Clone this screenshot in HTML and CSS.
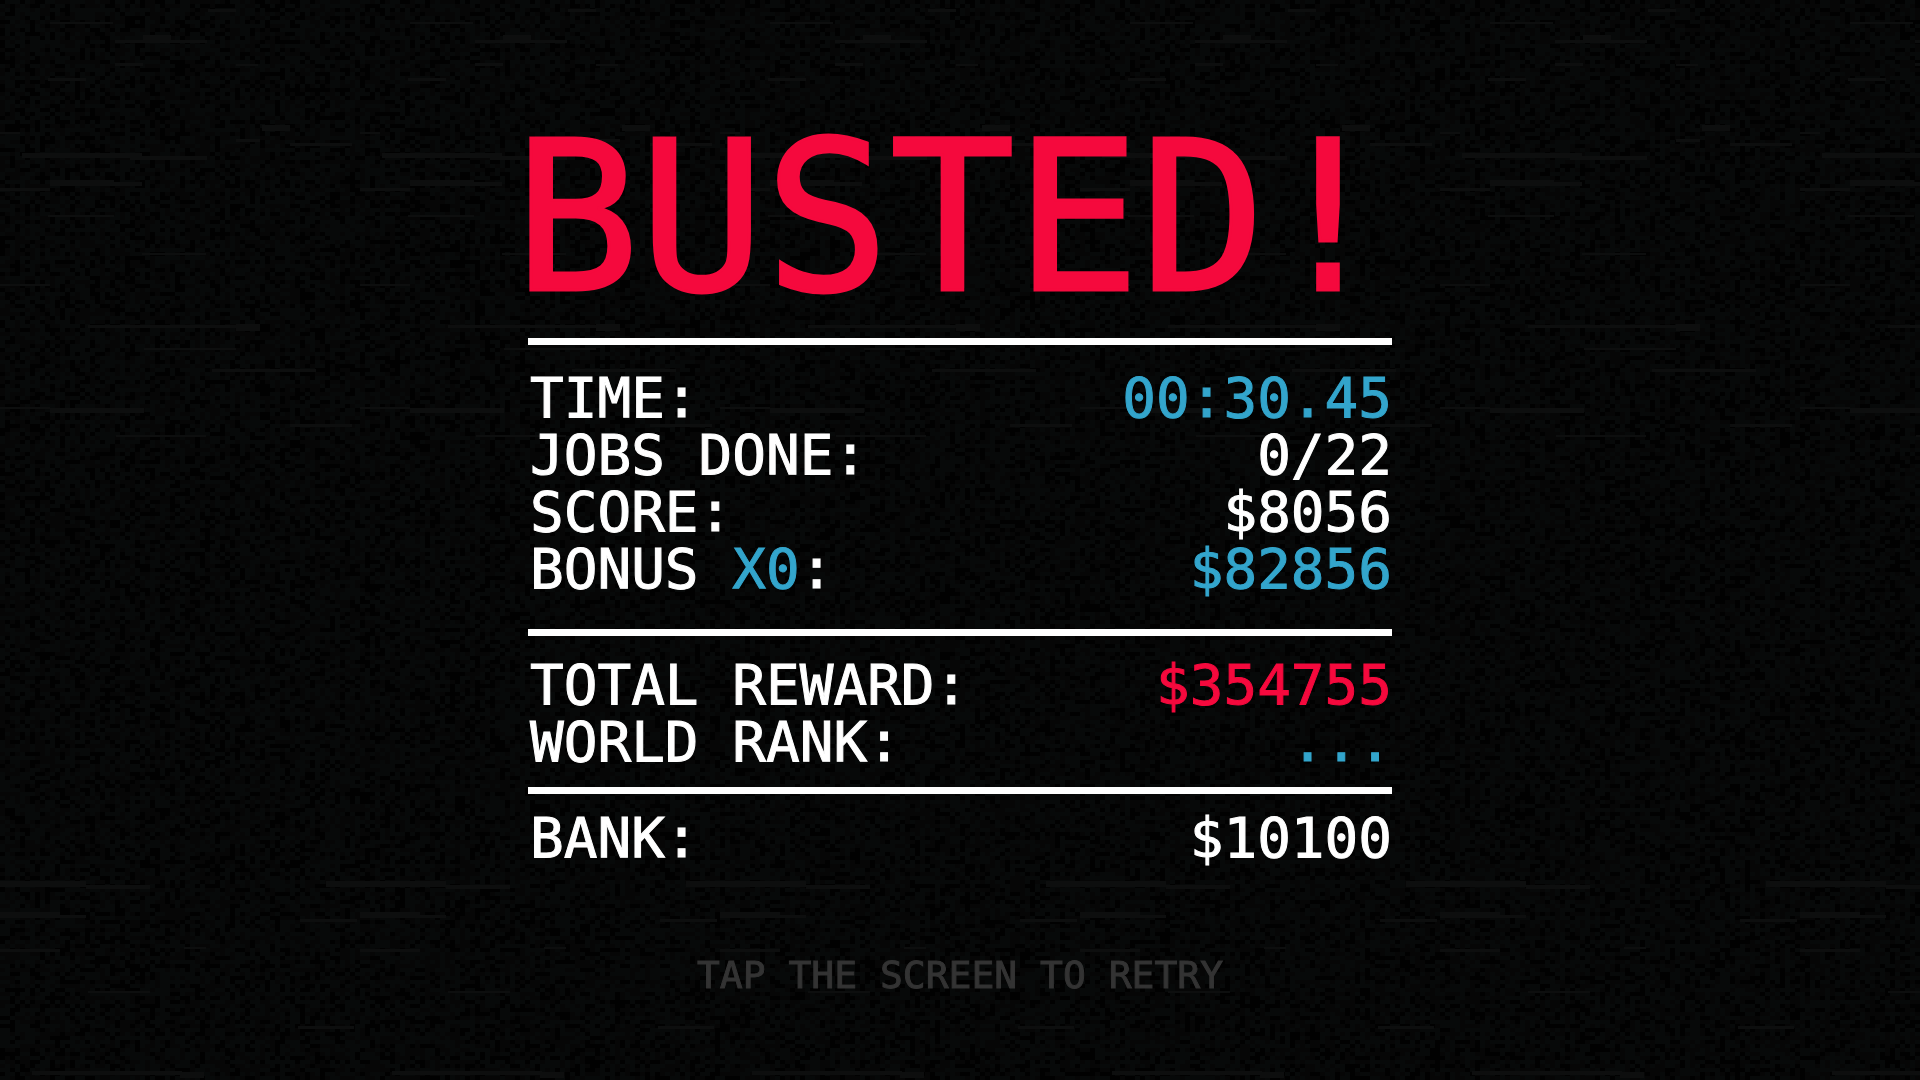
FILE: index.html
```html
<!DOCTYPE html>
<html lang="en">
<head>
<meta charset="utf-8">
<meta name="viewport" content="width=device-width, initial-scale=1">
<title>Busted!</title>
<link rel="stylesheet" href="styles.css">
</head>
<body>
<canvas class="static" aria-hidden="true"></canvas>
<main class="results">
  <h1 class="title">BUSTED!</h1>
  <dl class="stats stats-run">
    <div class="row"><dt>TIME:</dt><dd class="blue">00:30.45</dd></div>
    <div class="row"><dt>JOBS DONE:</dt><dd>0/22</dd></div>
    <div class="row"><dt>SCORE:</dt><dd>$8056</dd></div>
    <div class="row"><dt>BONUS <span class="blue">X0</span>:</dt><dd class="blue">$82856</dd></div>
  </dl>
  <dl class="stats stats-total">
    <div class="row"><dt>TOTAL REWARD:</dt><dd class="red">$354755</dd></div>
    <div class="row"><dt>WORLD RANK:</dt><dd class="blue">...</dd></div>
  </dl>
  <dl class="stats stats-bank">
    <div class="row"><dt>BANK:</dt><dd>$10100</dd></div>
  </dl>
  <button class="retry" type="button">TAP THE SCREEN TO RETRY</button>
</main>
<script src="static.js"></script>
</body>
</html>
```
FILE: styles.css
```css
* {
  box-sizing: border-box;
}

body {
  margin: 0;
  min-height: 100vh;
  background: #060707;
  color: #fff;
  font-family: "DejaVu Sans Mono", "Liberation Mono", monospace;
}

.static {
  position: fixed;
  inset: 0;
  z-index: -1;
  width: 100%;
  height: 100%;
}

.results {
  display: flex;
  flex-direction: column;
  width: 100%;
  max-width: 864px;
  margin: 0 auto;
  padding: 118px 0 40px;
}

.title {
  margin: 0 0 20px -14px;
  color: #f5093d;
  font-size: 208px;
  font-weight: 400;
  line-height: 200px;
  white-space: nowrap;
  -webkit-text-stroke: 3px #f5093d;
}

.stats {
  margin: 0;
  border-top: 7px solid #fff;
  font-size: 56px;
  line-height: 57px;
  -webkit-text-stroke: 1px currentColor;
}

.stats-run {
  padding: 24px 0 32px;
}

.stats-total {
  padding: 20px 0 17px;
}

.stats-bank {
  padding-top: 15px;
}

.row {
  display: flex;
  justify-content: space-between;
  padding-left: 2px;
}

.row dt,
.row dd {
  margin: 0;
  white-space: pre;
}

.blue {
  color: #33a5cc;
}

.red {
  color: #f5093d;
}

.retry {
  align-self: center;
  margin-top: 89px;
  padding: 0;
  border: 0;
  background: none;
  color: #333;
  font-family: inherit;
  font-size: 38px;
  line-height: 40px;
  -webkit-text-stroke: 1px currentColor;
}
```
FILE: static.js
```js
// Fills the backdrop with dim television static and faint scan streaks.
const canvas = document.querySelector(".static");
const ctx = canvas.getContext("2d");
const CELL_WIDTH = 5;
const CELL_HEIGHT = 4;
const TILE = 360;
// Streaks in one tile column: x, y, width, height
const STREAKS = [
  [208, 9, 28, 3], [50, 22, 63, 2], [115, 40, 92, 3], [143, 35, 28, 6],
  [115, 63, 28, 3], [236, 64, 22, 2], [48, 78, 38, 3], [262, 125, 28, 6],
  [0, 132, 20, 2], [236, 139, 24, 3], [290, 143, 62, 3], [22, 153, 120, 5],
  [130, 156, 77, 4], [50, 180, 64, 6], [100, 182, 42, 4], [0, 188, 50, 3],
  [48, 215, 66, 2], [142, 253, 64, 2], [0, 284, 50, 2], [88, 325, 150, 3],
  [236, 324, 24, 7], [144, 348, 92, 2], [212, 369, 104, 3], [0, 407, 50, 2],
  [50, 408, 94, 5], [290, 424, 62, 3], [116, 435, 90, 2],
  [0, 881, 86, 6], [86, 885, 64, 4], [326, 881, 34, 6],
  [0, 912, 60, 6], [60, 915, 26, 3], [300, 919, 57, 3], [0, 949, 60, 3],
  [184, 947, 22, 2], [88, 991, 62, 2], [298, 1026, 56, 3],
  [32, 1071, 150, 4], [180, 1072, 24, 6]
];

function draw() {
  let seed = 7;
  const random = () => {
    seed = (seed * 1664525 + 1013904223) >>> 0;
    return seed / 4294967296;
  };
  canvas.width = window.innerWidth;
  canvas.height = window.innerHeight;
  ctx.fillStyle = "#070909";
  ctx.fillRect(0, 0, canvas.width, canvas.height);
  for (let y = 0; y < canvas.height; y += CELL_HEIGHT) {
    for (let x = 0; x < canvas.width; x += CELL_WIDTH) {
      const level = random();
      if (level < 0.6) {
        ctx.fillStyle = level < 0.26 ? "#010101" : "#060606";
        ctx.fillRect(x, y, CELL_WIDTH, CELL_HEIGHT);
      }
    }
  }
  ctx.fillStyle = "#0d0e0e";
  for (let left = 0; left < canvas.width; left += TILE) {
    for (const [x, y, w, h] of STREAKS) {
      ctx.fillRect(left + x, y, w, h);
    }
  }
}

draw();
window.addEventListener("resize", draw);
```
